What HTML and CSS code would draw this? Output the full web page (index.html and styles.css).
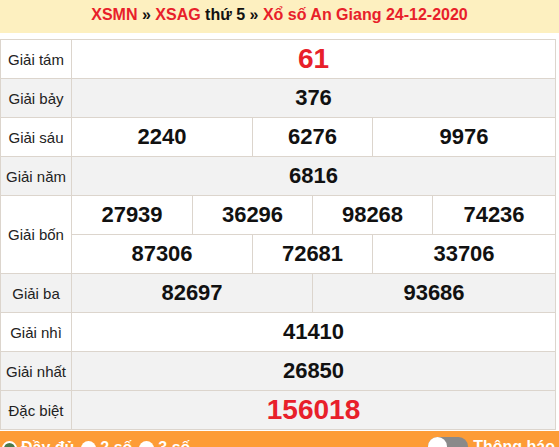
FILE: index.html
```html
<!DOCTYPE html>
<html lang="vi">
<head>
<meta charset="utf-8">
<title>XSAG 24-12-2020</title>
<link rel="stylesheet" href="styles.css">
</head>
<body>
<div class="head">
  <span class="red">XSMN</span> » <span class="red">XSAG</span> thứ 5 » <span class="red">Xổ số An Giang 24-12-2020</span>
</div>
<div class="table">
  <div class="lbl r1">Giải tám</div>
  <div class="num big red s6 r1">61</div>

  <div class="lbl gray">Giải bảy</div>
  <div class="num gray s6">376</div>

  <div class="lbl">Giải sáu</div>
  <div class="num c3a">2240</div>
  <div class="num c3b">6276</div>
  <div class="num c3c">9976</div>

  <div class="lbl gray">Giải năm</div>
  <div class="num gray s6">6816</div>

  <div class="lbl tall">Giải bốn</div>
  <div class="num c4a">27939</div>
  <div class="num c4b">36296</div>
  <div class="num c4c">98268</div>
  <div class="num c4d">74236</div>
  <div class="num c3a">87306</div>
  <div class="num c3b">72681</div>
  <div class="num c3c">33706</div>

  <div class="lbl gray">Giải ba</div>
  <div class="num gray c2a">82697</div>
  <div class="num gray c2b">93686</div>

  <div class="lbl">Giải nhì</div>
  <div class="num s6">41410</div>

  <div class="lbl gray">Giải nhất</div>
  <div class="num gray s6">26850</div>

  <div class="lbl gray">Đặc biệt</div>
  <div class="num big red gray s6">156018</div>
</div>
<div class="bar">
  <div class="opts">
    <label class="opt"><span class="radio on"></span>Đầy đủ</label>
    <label class="opt"><span class="radio"></span>2 số</label>
    <label class="opt"><span class="radio"></span>3 số</label>
  </div>
  <div class="notify">
    <span class="toggle"><span class="knob"></span></span>
    <span>Thông báo</span>
  </div>
</div>
</body>
</html>
```
FILE: styles.css
```css
html, body {
  margin: 0;
  padding: 0;
  background: #fff;
  font-family: "Liberation Sans", Arial, sans-serif;
  overflow: hidden;
}
.head {
  height: 33px;
  background: #fdf0c0;
  text-align: center;
  font-weight: bold;
  font-size: 16px;
  line-height: 29px;
  color: #111;
}
.red { color: #e8202a; }
.table {
  margin-top: 6px;
  width: 554px;
  padding: 1px;
  background: #dcd5cd;
  display: grid;
  grid-template-columns: 70px 120px 59px 59px 59px 59px 122px;
  grid-auto-rows: 38px;
  gap: 1px;
}
.table > div {
  background: #fff;
  display: flex;
  align-items: center;
  justify-content: center;
}
.table > div.gray { background: #f2f2f2; }
.lbl {
  grid-column: 1;
  font-size: 15px;
  color: #222;
}
.tall { grid-row: span 2; }
.num {
  font-size: 22px;
  font-weight: bold;
  color: #111;
}
.num.big {
  font-size: 28px;
  color: #e8202a;
}
.s6 { grid-column: 2 / 8; }
.c3a { grid-column: 2 / 4; }
.c3b { grid-column: 4 / 6; }
.c3c { grid-column: 6 / 8; }
.c4a { grid-column: 2 / 3; }
.c4b { grid-column: 3 / 5; }
.c4c { grid-column: 5 / 7; }
.c4d { grid-column: 7 / 8; }
.c2a { grid-column: 2 / 5; }
.c2b { grid-column: 5 / 8; }
.bar {
  margin-top: 1px;
  height: 40px;
  background: #fd9c36;
  display: flex;
  justify-content: space-between;
  align-items: flex-start;
  padding: 8px 4px 0 2px;
  color: #fff;
  font-weight: bold;
  font-size: 16px;
}
.opts {
  display: flex;
  gap: 7px;
}
.opt {
  display: flex;
  align-items: center;
  gap: 4px;
  line-height: 18px;
}
.radio {
  width: 15px;
  height: 15px;
  border-radius: 50%;
  background: #fff;
  box-sizing: border-box;
  display: inline-block;
}
.radio.on {
  border: 2px solid #fff;
  background: #4a7a4a;
}
.notify {
  display: flex;
  align-items: center;
  gap: 5px;
  line-height: 18px;
  margin-top: -2px;
}
.toggle {
  width: 40px;
  height: 19px;
  background: #8a8a8a;
  border-radius: 10px;
  position: relative;
  display: inline-block;
}
.knob {
  position: absolute;
  left: 0;
  top: 0;
  width: 19px;
  height: 19px;
  border-radius: 50%;
  background: #fff;
}
```
